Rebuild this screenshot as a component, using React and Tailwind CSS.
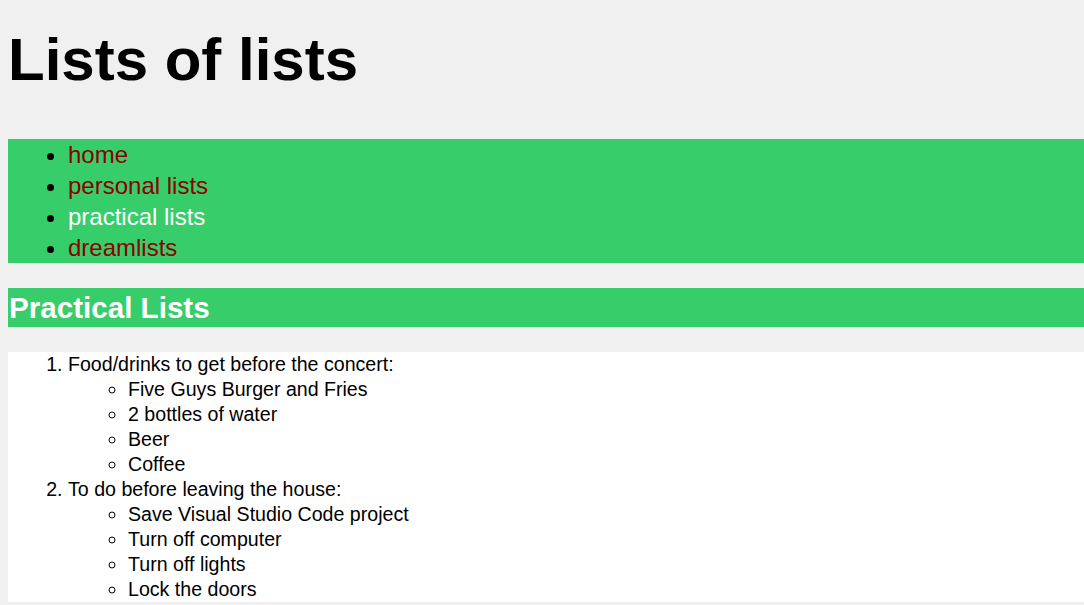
export default function App() {
  const food = ["Five Guys Burger and Fries", "2 bottles of water", "Beer", "Coffee"];
  const chores = [
    "Save Visual Studio Code project",
    "Turn off computer",
    "Turn off lights",
    "Lock the doors",
  ];

  return (
    <div className="min-h-screen bg-[#f0f0f0] pl-2 pt-[25px] pb-1 font-['Liberation_Sans',Arial,sans-serif] text-black">
      <h1 className="mb-[45px] text-[60px] font-bold leading-[69px]">
        Lists of lists
      </h1>

      <ul className="list-disc bg-[#37cd6a] pl-[60px] text-[24px] leading-[31px]">
        <li>
          <a className="text-[#8b0000]">home</a>
        </li>
        <li>
          <a className="text-[#8b0000]">personal lists</a>
        </li>
        <li>
          <a className="text-white">practical lists</a>
        </li>
        <li>
          <a className="text-[#8b0000]">dreamlists</a>
        </li>
      </ul>

      <h2 className="mt-[25px] bg-[#37cd6a] pl-px text-[29.6px] font-bold leading-[39px] text-white">
        Practical Lists
      </h2>

      <ol className="mt-[25px] list-decimal bg-white pl-[60px] text-[19.6px] leading-[25px]">
        <li>
          Food/drinks to get before the concert:
          <ul className="list-[circle] pl-[60px]">
            {food.map((item) => (
              <li key={item}>{item}</li>
            ))}
          </ul>
        </li>
        <li>
          To do before leaving the house:
          <ul className="list-[circle] pl-[60px]">
            {chores.map((item) => (
              <li key={item}>{item}</li>
            ))}
          </ul>
        </li>
      </ol>
    </div>
  );
}
